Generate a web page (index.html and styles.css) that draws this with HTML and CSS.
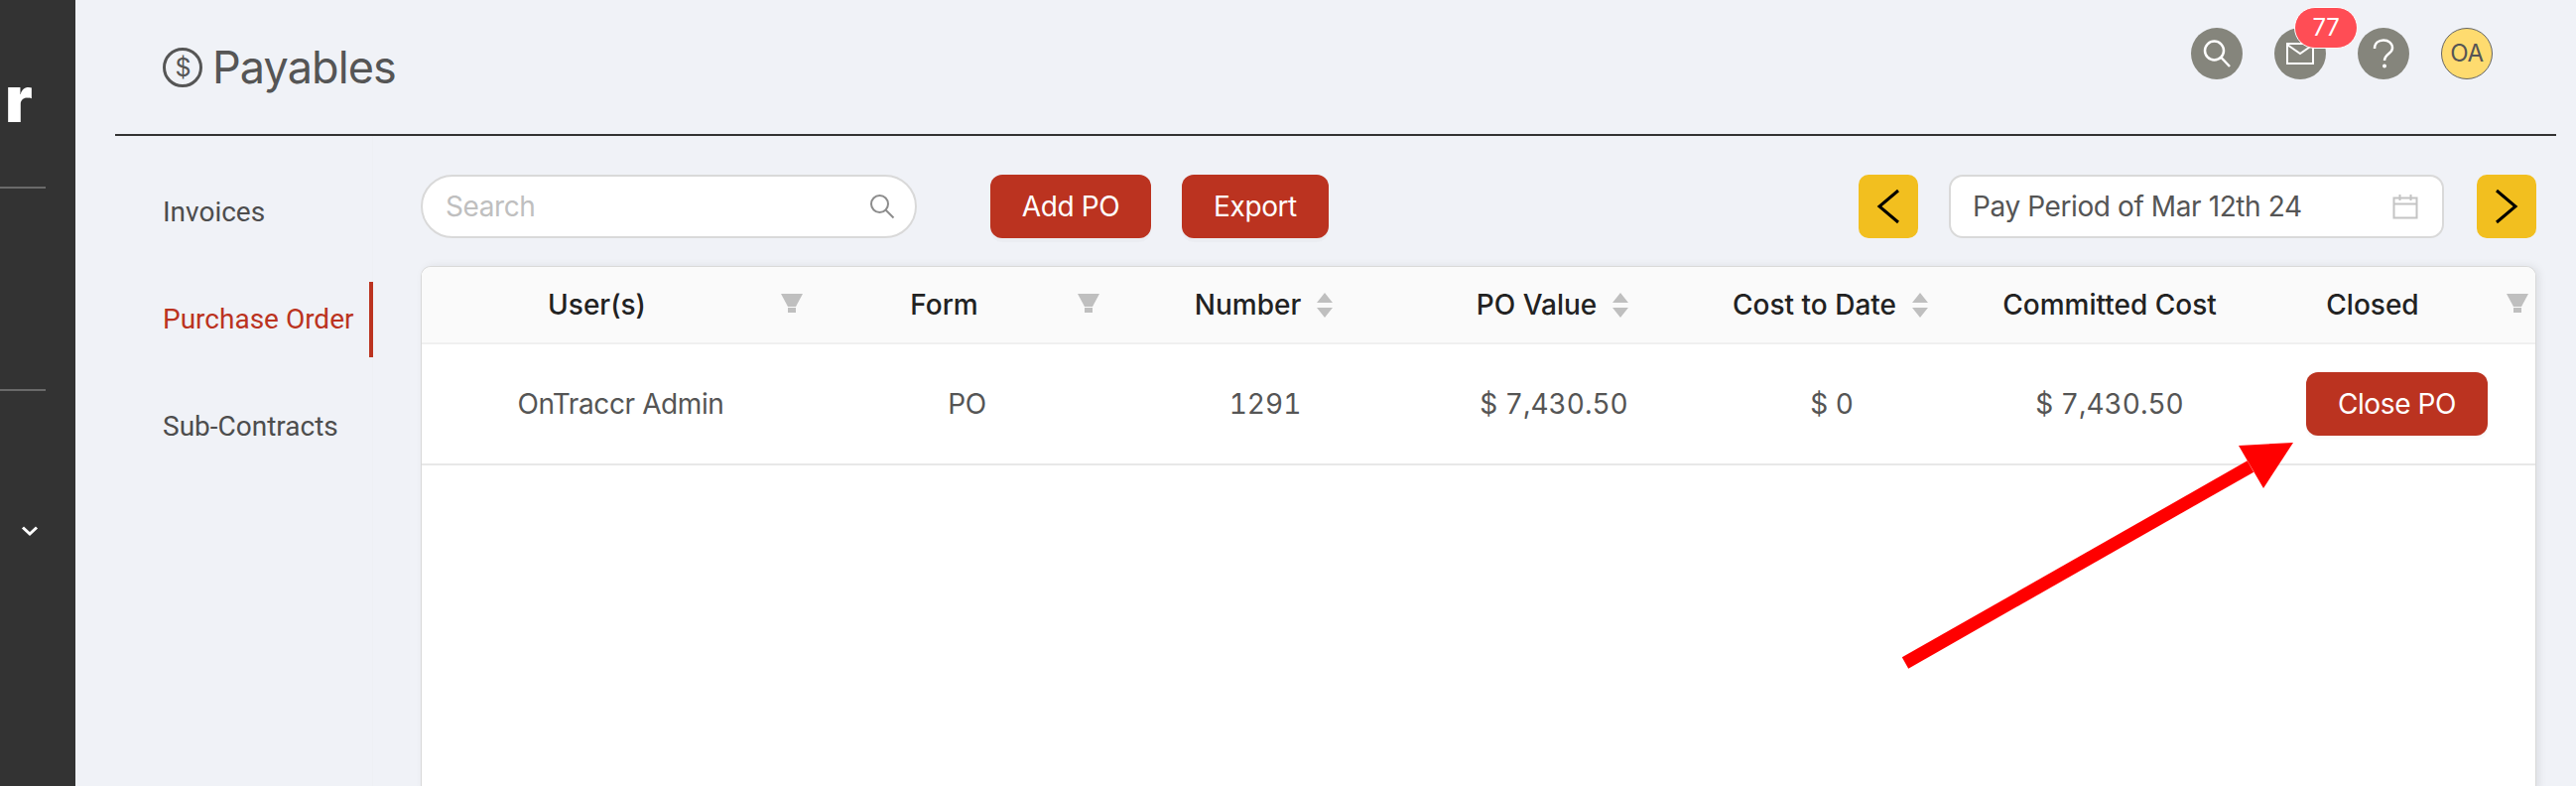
FILE: index.html
```html
<!DOCTYPE html>
<html>
<head>
    <title>Payables</title>
    <meta name="viewport" content="width=device-width, initial-scale=1">
    <link rel="stylesheet" href="styles.css">
</head>
<body>
    <aside class="sidebar">
        <div class="logo">r</div>
        <div class="side-divider"></div>
        <div class="side-gap"></div>
        <div class="side-divider"></div>
        <svg class="side-chevron" width="18" height="12" viewBox="0 0 18 12"><path d="M2 2.500 L9 9 L16 2.500" fill="none" stroke="#fff" stroke-width="3"/></svg>
    </aside>

    <main class="main">
        <header class="page-header">
            <h1 class="page-title">
                <svg class="title-icon" width="40" height="40" viewBox="0 0 40 40"><circle cx="20" cy="20" r="18.500" fill="none" stroke="#555" stroke-width="3"/><text x="20" y="29" text-anchor="middle" class="title-icon-text">$</text></svg>
                <span class="title-text">Payables</span>
            </h1>
            <div class="header-icons">
                <span class="round-icon">
                    <svg width="32" height="32" viewBox="0 0 32 32"><circle cx="13.500" cy="13" r="9.500" fill="none" stroke="#fff" stroke-width="2.500"/><path d="M20.500 20 L29 29" stroke="#fff" stroke-width="2.500"/></svg>
                </span>
                <span class="round-icon">
                    <svg width="28" height="22" viewBox="0 0 28 22"><path d="M1 1 H27 V21 H1 Z" fill="none" stroke="#fff" stroke-width="2"/><path d="M1 2 L14 11 L27 2" fill="none" stroke="#fff" stroke-width="2"/></svg>
                    <span class="badge">77</span>
                </span>
                <span class="round-icon">
                    <svg width="24" height="30" viewBox="0 0 24 30"><path d="M3 10 C3 4.500 7 1.500 12 1.500 C17 1.500 21 4.500 21 9.500 C21 15 13 15 13 22" fill="none" stroke="#fff" stroke-width="2.500"/><circle cx="13" cy="27.500" r="2" fill="#fff"/></svg>
                </span>
                <span class="avatar">OA</span>
            </div>
        </header>

        <div class="page-body">
            <nav class="side-nav">
                <a class="nav-item">Invoices</a>
                <a class="nav-item active">Purchase Order</a>
                <a class="nav-item">Sub-Contracts</a>
            </nav>

            <section class="content">
                <div class="toolbar">
                    <div class="search-box">
                        <span class="search-placeholder">Search</span>
                        <svg width="26" height="26" viewBox="0 0 26 26"><circle cx="10.500" cy="10.500" r="8.500" fill="none" stroke="#8c8c8c" stroke-width="2"/><path d="M16.500 16.500 L24.500 24.500" stroke="#8c8c8c" stroke-width="2"/></svg>
                    </div>
                    <button class="btn-red btn-add">Add PO</button>
                    <button class="btn-red btn-export">Export</button>
                    <div class="toolbar-right">
                        <button class="btn-yellow">
                            <svg width="24" height="36" viewBox="0 0 24 36"><path d="M22 2 L3 18 L22 34" fill="none" stroke="#000" stroke-width="3"/></svg>
                        </button>
                        <div class="date-picker">
                            <span>Pay Period of Mar 12th 24</span>
                            <svg width="26" height="26" viewBox="0 0 26 26"><path d="M1.500 4.500 H24.500 V24.500 H1.500 Z M1.500 10.500 H24.500 M7.500 1 V7 M18.500 1 V7" fill="none" stroke="#c4c4c4" stroke-width="2"/></svg>
                        </div>
                        <button class="btn-yellow">
                            <svg width="24" height="36" viewBox="0 0 24 36"><path d="M2 2 L21 18 L2 34" fill="none" stroke="#000" stroke-width="3"/></svg>
                        </button>
                    </div>
                </div>

                <div class="table-card">
                    <div class="table-row table-head">
                        <div class="cell filter-cell col-users"><span class="head-title">User(s)</span>
                            <svg class="filter-icon" width="22" height="19" viewBox="0 0 22 19"><path d="M0 0 H22 L15 13 H7 Z M7 14 H15 V19 H7 Z" fill="#bfbfbf"/></svg>
                        </div>
                        <div class="cell filter-cell col-form"><span class="head-title">Form</span>
                            <svg class="filter-icon" width="22" height="19" viewBox="0 0 22 19"><path d="M0 0 H22 L15 13 H7 Z M7 14 H15 V19 H7 Z" fill="#bfbfbf"/></svg>
                        </div>
                        <div class="cell sort-cell col-number">Number
                            <svg class="sort-icon" width="16" height="25" viewBox="0 0 16 25"><path d="M8 0 L16 10 H0 Z M0 15 H16 L8 25 Z" fill="#bfbfbf"/></svg>
                        </div>
                        <div class="cell sort-cell col-value">PO Value
                            <svg class="sort-icon" width="16" height="25" viewBox="0 0 16 25"><path d="M8 0 L16 10 H0 Z M0 15 H16 L8 25 Z" fill="#bfbfbf"/></svg>
                        </div>
                        <div class="cell sort-cell col-cost">Cost to Date
                            <svg class="sort-icon" width="16" height="25" viewBox="0 0 16 25"><path d="M8 0 L16 10 H0 Z M0 15 H16 L8 25 Z" fill="#bfbfbf"/></svg>
                        </div>
                        <div class="cell col-committed">Committed Cost</div>
                        <div class="cell filter-cell closed-cell col-closed"><span class="head-title">Closed</span>
                            <svg class="filter-icon" width="22" height="19" viewBox="0 0 22 19"><path d="M0 0 H22 L15 13 H7 Z M7 14 H15 V19 H7 Z" fill="#bfbfbf"/></svg>
                        </div>
                    </div>
                    <div class="table-row table-data">
                        <div class="cell col-users">OnTraccr Admin</div>
                        <div class="cell col-form">PO</div>
                        <div class="cell money col-number">1291</div>
                        <div class="cell money col-value">$ 7,430.50</div>
                        <div class="cell money col-cost">$ 0</div>
                        <div class="cell money col-committed">$ 7,430.50</div>
                        <div class="cell col-closed close-cell"><button class="btn-red btn-close">Close PO</button></div>
                    </div>
                </div>
            </section>
        </div>
    </main>

    <!-- annotation drawn on top of the screenshot -->
    <svg class="arrow" width="2596" height="792" viewBox="0 0 2596 792">
        <path d="M1920 668 L2268 470" stroke="#ff0000" stroke-width="13" fill="none"/>
        <path d="M2311 446 L2256 449 L2281 492 Z" fill="#ff0000"/>
    </svg>
</body>
</html>
```

FILE: styles.css
```css
* {
    margin: 0;
    padding: 0;
    box-sizing: border-box;
}

body {
    font-family: 'Inter', 'Liberation Sans', sans-serif;
    background: #f0f2f7;
    color: #555;
    display: flex;
    height: 792px;
    overflow: hidden;
    letter-spacing: -0.4px;
}

button {
    border: none;
    font-family: inherit;
    letter-spacing: inherit;
    cursor: pointer;
}

/* dark left bar */
.sidebar {
    width: 76px;
    flex-shrink: 0;
    background: #333;
}

.logo {
    height: 188px;
    padding-top: 60px;
    margin-left: 5px;
    color: #fff;
    font-size: 64px;
    font-weight: 900;
    line-height: 80px;
}

.side-divider {
    width: 46px;
    height: 2px;
    background: #6a6a6a;
}

.side-gap {
    height: 202px;
}

.side-chevron {
    display: block;
    margin: 135px 0 0 21px;
}

.main {
    flex: 1;
    min-width: 0;
    padding: 0 20px 0 40px;
}

/* title row */
.page-header {
    height: 137px;
    border-bottom: 2px solid #333;
    display: flex;
    justify-content: space-between;
    padding: 28px 64px 0 48px;
}

.page-title {
    display: flex;
    align-items: center;
    align-self: flex-start;
    gap: 10px;
    margin-top: 20px;
    height: 40px;
    font-size: 45px;
    font-weight: 400;
    letter-spacing: -0.9px;
    color: #555;
}

.title-text {
    margin-top: -2px;
}

.title-icon-text {
    font-size: 25px;
    fill: #555;
}

.header-icons {
    display: flex;
    gap: 32px;
}

.round-icon {
    position: relative;
    width: 52px;
    height: 52px;
    border-radius: 50%;
    background: #85857c;
    display: flex;
    align-items: center;
    justify-content: center;
}

.badge {
    position: absolute;
    left: 20px;
    top: -21px;
    width: 64px;
    height: 42px;
    border: 1px solid #fff;
    border-radius: 21px;
    background: #ff4d55;
    color: #fff;
    font-size: 24px;
    line-height: 40px;
    text-align: center;
}

.avatar {
    width: 52px;
    height: 52px;
    border-radius: 50%;
    border: 1px solid #666;
    background: #fedb6f;
    color: #555;
    font-size: 24px;
    line-height: 50px;
    text-align: center;
}

.page-body {
    display: flex;
    height: 655px;
}

/* Invoices / Purchase Order / Sub-Contracts */
.side-nav {
    width: 260px;
    flex-shrink: 0;
    padding-top: 39px;
    margin-right: 48px;
    border-right: 1px solid #eef0f4;
}

.nav-item {
    display: block;
    height: 76px;
    margin-bottom: 32px;
    padding-left: 48px;
    font-family: 'Roboto', sans-serif;
    font-size: 28px;
    letter-spacing: 0;
    line-height: 76px;
    color: #4d4d4d;
}

.nav-item.active {
    color: #bb3320;
    border-right: 4px solid #bb3320;
    margin-right: -1px;
}

.content {
    flex: 1;
    min-width: 0;
    padding-right: 20px;
    padding-top: 39px;
}

.toolbar {
    display: flex;
    height: 64px;
    margin-bottom: 28px;
}

.search-box {
    width: 500px;
    height: 64px;
    border: 2px solid #d9d9d9;
    border-radius: 32px;
    background: #fff;
    display: flex;
    align-items: center;
    justify-content: space-between;
    padding: 0 20px 0 23px;
    margin-right: 74px;
}

.search-placeholder {
    font-size: 28px;
    color: #bfbfbf;
}

.btn-red {
    background: #bb3320;
    color: #fff;
    border-radius: 12px;
    font-size: 28px;
    box-shadow: 0 4px 0 rgba(0,0,0,0.02);
}

.btn-add {
    width: 162px;
    height: 64px;
    margin-right: 31px;
}

.btn-export {
    width: 148px;
    height: 64px;
}

.toolbar-right {
    margin-left: auto;
    display: flex;
    gap: 30px;
}

.btn-yellow {
    width: 60px;
    height: 64px;
    border-radius: 10px;
    background: #f2bf1f;
    display: flex;
    align-items: center;
    justify-content: center;
}

.date-picker {
    width: 499px;
    height: 64px;
    margin: 0 3px 0 1px;
    border: 2px solid #d9d9d9;
    border-radius: 14px;
    background: #fff;
    display: flex;
    align-items: center;
    justify-content: space-between;
    padding: 0 24px 0 22px;
    font-size: 28px;
    color: #555;
}

/* table */
.table-card {
    background: #fff;
    border: 1px solid #d9d9d9;
    border-bottom: none;
    border-radius: 10px 10px 0 0;
    box-shadow: 3px 0 8px rgba(0,0,0,0.08);
    height: 530px;
    overflow: hidden;
}

.table-row {
    display: grid;
    grid-template-columns: 401px 297px 304px 278px 282px 278px 291px;
}

.table-head {
    height: 78px;
    background: #fafafa;
    border-bottom: 2px solid #f0f0f0;
    color: #222;
    font-weight: 500;
    letter-spacing: 0;
}

.table-data {
    height: 122px;
    border-bottom: 2px solid #e8e8e8;
    color: #555;
}

.cell {
    display: flex;
    align-items: center;
    justify-content: center;
    font-size: 28px;
    white-space: nowrap;
}

.money {
    font-variant-numeric: tabular-nums;
    letter-spacing: 0;
}

.filter-cell {
    justify-content: flex-start;
}

.head-title {
    flex: 1;
    text-align: center;
}

.filter-icon {
    flex-shrink: 0;
    margin: -3px 17px 0 9px;
}

.col-form .filter-icon {
    margin-right: 15px;
}

.closed-cell .filter-icon {
    margin-right: 8px;
}

.sort-cell {
    gap: 16px;
    padding-right: 3px;
}

.close-cell {
    padding-left: 10px;
}

.btn-close {
    width: 183px;
    height: 64px;
}

.arrow {
    position: absolute;
    left: 0;
    top: 0;
    pointer-events: none;
}
```
